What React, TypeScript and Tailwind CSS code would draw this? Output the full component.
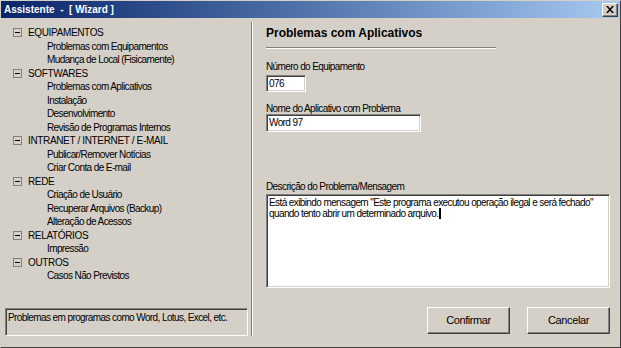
import React from 'react';

const tree = [
  { label: 'EQUIPAMENTOS', items: ['Problemas com Equipamentos', 'Mudança de Local (Fisicamente)'] },
  { label: 'SOFTWARES', items: ['Problemas com Aplicativos', 'Instalação', 'Desenvolvimento', 'Revisão de Programas Internos'] },
  { label: 'INTRANET / INTERNET / E-MAIL', items: ['Publicar/Remover Notícias', 'Criar Conta de E-mail'] },
  { label: 'REDE', items: ['Criação de Usuário', 'Recuperar Arquivos (Backup)', 'Alteração de Acessos'] },
  { label: 'RELATÓRIOS', items: ['Impressão'] },
  { label: 'OUTROS', items: ['Casos Não Previstos'] },
];

const sunken =
  'border-t border-l border-b border-r border-t-[#808080] border-l-[#808080] border-b-white border-r-white shadow-[inset_1px_1px_0_#404040,inset_-1px_-1px_0_#d4d0c8]';
const raised =
  'border-t border-l border-b border-r border-t-white border-l-white border-b-[#404040] border-r-[#404040] shadow-[inset_-1px_-1px_0_#808080]';

function Button({ label }: { label: string }) {
  return (
    <button className={`h-[27px] w-[83px] bg-[#d4d0c8] text-[11px] tracking-[-0.4px] text-black ${raised}`}>{label}</button>
  );
}

export default function App() {
  return (
    <div className="flex h-[348px] w-[621px] flex-col border border-t-[#d4d0c8] border-l-[#d4d0c8] border-b-[#404040] border-r-[#404040] bg-[#d4d0c8] font-['Liberation_Sans',Arial,sans-serif] text-black">
      <div className="flex h-[17px] shrink-0 items-center justify-between bg-gradient-to-r from-[#0a246a] to-[#a6caf0] pl-[3px] pr-[2px]">
        <span className="text-[10px] font-bold text-white">Assistente&nbsp; - &nbsp;[ Wizard ]</span>
        <div className={`flex h-[14px] w-[16px] items-center justify-center bg-[#d4d0c8] ${raised}`}>
          <svg width="8" height="7" viewBox="0 0 8 7">
            <path d="M0 0h2l2 2.5 2-2.5h2l-3 3.5 3 3.5h-2l-2-2.5-2 2.5h-2l3-3.5z" fill="#000" />
          </svg>
        </div>
      </div>

      <div className="flex flex-1 text-[10px] tracking-[-0.6px]">
        <div className="flex w-[250px] flex-col pb-[11px]">
          <div className="flex-1 pt-[8px] leading-[13.5px]">
            {tree.map((g) => (
              <div key={g.label}>
                <div className="flex items-center">
                  <span className="ml-[12px] mr-[6px] flex h-[9px] w-[9px] items-center justify-center border border-[#808080] bg-[#d4d0c8]">
                    <span className="h-px w-[5px] bg-black" />
                  </span>
                  <span className="tracking-[-0.35px]">{g.label}</span>
                </div>
                {g.items.map((it) => (
                  <div key={it} className="pl-[46px]">
                    {it}
                  </div>
                ))}
              </div>
            ))}
          </div>
          <div className={`ml-[4px] h-[28px] w-[243px] whitespace-nowrap px-[2px] pt-[1px] ${sunken}`}>
            Problemas em programas como Word, Lotus, Excel, etc.
          </div>
        </div>

        <div className="mb-[11px] mt-[4px] w-[2px] border-l border-r border-l-[#808080] border-r-white" />

        <div className="flex flex-1 flex-col pl-[13px] pr-[10px] pt-[7px]">
          <div className="text-[12px] font-bold leading-[16px] tracking-normal">Problemas com Aplicativos</div>
          <div className="mt-[6px] w-[230px] border-t border-b border-t-[#808080] border-b-white" />
          <div className="mt-[11px] leading-[13px]">Número do Equipamento</div>
          <div className={`mt-[2px] h-[17px] w-[40px] bg-white px-[2px] leading-[15px] ${sunken}`}>076</div>
          <div className="mt-[10px] leading-[13px]">Nome do Aplicativo com Problema</div>
          <div className={`mt-[-1px] h-[18px] w-[155px] bg-white px-[2px] leading-[16px] ${sunken}`}>Word 97</div>
          <div className="mt-[48px] leading-[13px]">Descrição do Problema/Mensagem</div>
          <div className={`mt-[1px] h-[94px] w-[344px] bg-white px-[2px] pt-[2px] leading-[11px] ${sunken}`}>
            Está exibindo mensagem "Este programa executou operação ilegal e será fechado" quando tento abrir um determinado arquivo.
            <span className="ml-px inline-block h-[11px] w-[2px] bg-black align-[-2px]" />
          </div>
          <div className="mt-[19px] flex justify-end gap-[17px]">
            <Button label="Confirmar" />
            <Button label="Cancelar" />
          </div>
        </div>
      </div>
    </div>
  );
}
